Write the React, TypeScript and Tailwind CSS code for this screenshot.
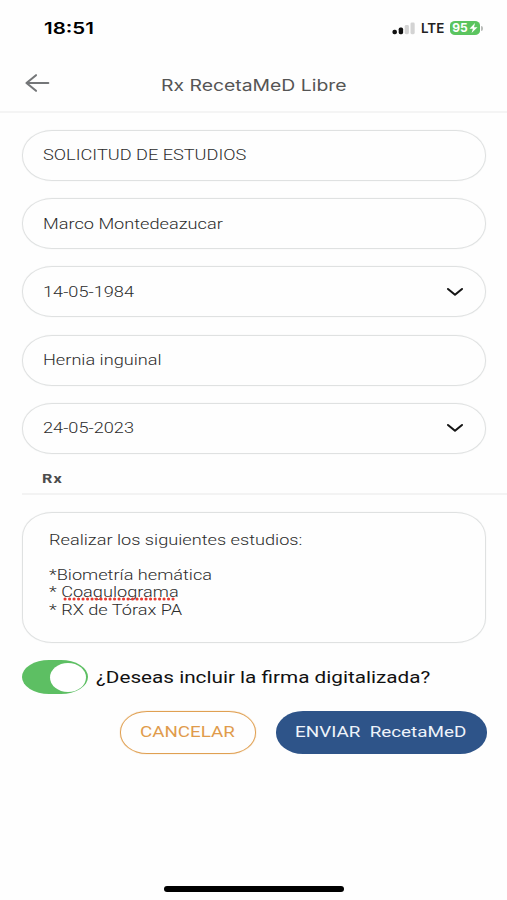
import type { ReactNode } from "react";

function Wide({ className = "", children }: { className?: string; children: ReactNode }) {
  return (
    <span className={`inline-block origin-left whitespace-pre ${className}`}>{children}</span>
  );
}

function Chevron() {
  return (
    <svg width="18" height="12" viewBox="0 0 18 12" fill="none" stroke="#151515" strokeWidth="2.1" strokeLinecap="round" strokeLinejoin="round">
      <path d="M2 3 L9 8.7 L16 3" />
    </svg>
  );
}

function Field({ text, select = false }: { text: string; select?: boolean }) {
  return (
    <div className="flex h-[51px] items-center justify-between rounded-[30px/25px] border-[1.5px] border-[#dfe1e1] pr-[21px] pl-[20px] text-[15.5px] font-light text-[#2c2c2c] shadow-[0_0_1px_#dfe1e1]">
      <Wide className="scale-x-[1.172] pt-[1px]">{text}</Wide>
      {select && <Chevron />}
    </div>
  );
}

function StatusBar() {
  return (
    <div className="flex h-[56px] items-center justify-between pr-[24px] pl-[43.5px] font-[Inter,sans-serif]">
      <Wide className="scale-x-[1.28] text-[16px] font-semibold text-black">18:51</Wide>
      <div className="flex items-center">
        <svg width="23" height="13" viewBox="0 0 23 13">
          <rect x="0.5" y="7.8" width="4.4" height="4.4" rx="1.8" fill="#111" />
          <rect x="6.7" y="5.6" width="4.4" height="6.6" rx="1.6" fill="#111" />
          <rect x="12.7" y="3" width="4.2" height="9.2" rx="1.4" fill="#d3d3d3" />
          <rect x="18.5" y="0.5" width="4.2" height="11.7" rx="1.4" fill="#d3d3d3" />
        </svg>
        <div className="ml-[6px] w-[29px] text-[13px] leading-none font-semibold text-[#222]">
          <Wide className="scale-x-[1.03]">LTE</Wide>
        </div>
        <div className="flex h-[14px] w-[30px] items-center justify-center rounded-[5px/4px] bg-[#5bc45f] text-[12px] leading-[14px] font-bold text-white">
          <span className="pr-[1px]">95</span>
          <svg width="9" height="10" viewBox="0 0 9 10" fill="white">
            <path d="M6 0 L0.5 5.7 H3.9 L2.6 10 L8.5 4.2 H5 Z" />
          </svg>
        </div>
        <div className="ml-[1px] h-[5px] w-[2px] rounded-r-full bg-[#b9bcb9]" />
      </div>
    </div>
  );
}

export default function App() {
  return (
    <main className="flex h-[900px] w-[507px] flex-col overflow-hidden bg-[#fefefe] font-[Roboto,sans-serif]">
      <StatusBar />
      <header className="flex h-[57px] items-center border-b-2 border-[#f4f4f4] pl-[25px]">
        <svg className="mb-[2px]" width="25" height="20" viewBox="0 0 25 20" fill="none" stroke="#747678" strokeWidth="2.1" strokeLinecap="round" strokeLinejoin="round">
          <path d="M23.3 10 H1.5 M11 2.2 L1.5 10 L11 17.8" />
        </svg>
        <h1 className="ml-[111px] pt-[3px] font-[Inter,sans-serif] text-[16px] text-[#555555]">
          <Wide className="scale-x-[1.21]">Rx RecetaMeD Libre</Wide>
        </h1>
      </header>
      <section className="mt-[17px] mr-[21px] ml-[21.5px] flex flex-col gap-[17.2px]">
        <Field text="SOLICITUD DE ESTUDIOS" />
        <Field text="Marco Montedeazucar" />
        <Field text="14-05-1984" select />
        <Field text="Hernia inguinal" />
        <Field text="24-05-2023" select />
      </section>
      <div className="ml-[22px] flex h-[41px] items-center border-b-2 border-[#f3f3f3] pt-[10px] pl-[20px] text-[13px] font-bold text-[#4c4c4c]">
        <Wide className="scale-x-[1.24] tracking-[1px]">Rx</Wide>
      </div>
      <div className="mt-[17px] mr-[21px] ml-[21.5px] flex h-[131.5px] flex-col items-start rounded-[30px/25px] border-[1.5px] border-[#dfe1e1] pt-[19px] pl-[26.5px] text-[15.5px] leading-[17.5px] font-light text-[#2c2c2c] shadow-[0_0_1px_#dfe1e1]">
        <Wide className="scale-x-[1.172]">Realizar los siguientes estudios:</Wide>
        <div className="h-[17.5px]" />
        <Wide className="scale-x-[1.172]">*Biometría hemática</Wide>
        <div className="relative">
          <Wide className="scale-x-[1.172]">* Coagulograma</Wide>
          <svg className="absolute top-[12.5px] left-[13.5px]" width="116" height="4" viewBox="0 0 116 4">
            <path d="M2 2 H114.5" stroke="#e8392f" strokeWidth="3" strokeLinecap="round" strokeDasharray="0.1 4.4" />
          </svg>
        </div>
        <Wide className="scale-x-[1.172]">* RX de Tórax PA</Wide>
      </div>
      <div className="mt-[17px] ml-[21.5px] flex h-[33.5px] items-center">
        <div className="flex h-[33.5px] w-[66.5px] items-center justify-end rounded-[27px/17px] bg-[#5dbf63] pr-[2px]">
          <div className="h-[29px] w-[36px] rounded-[50%] bg-white" />
        </div>
        <div className="ml-[8px] pt-[2px] text-[17px] text-[#111111]">
          <Wide className="scale-x-[1.218]">¿Deseas incluir la firma digitalizada?</Wide>
        </div>
      </div>
      <div className="mt-[17.5px] ml-[120px] flex h-[42.5px] gap-[20.5px] text-[15.5px]">
        <button className="flex w-[135.5px] items-center rounded-[27px/21px] border-[1.5px] border-[#e0a052] pt-px pl-[19px] text-[#e09b4b] shadow-[0_0_1px_#e0a052]">
          <Wide className="scale-x-[1.21]">CANCELAR</Wide>
        </button>
        <button className="flex w-[210.5px] items-center rounded-[27px/21px] bg-[#2e5489] pt-px pl-[19px] text-[#eef3fa]">
          <Wide className="scale-x-[1.215]">{"ENVIAR  RecetaMeD"}</Wide>
        </button>
      </div>
      <div className="mt-auto mb-[8.5px] ml-[164px] h-[6px] w-[180px] rounded-full bg-black" />
    </main>
  );
}
